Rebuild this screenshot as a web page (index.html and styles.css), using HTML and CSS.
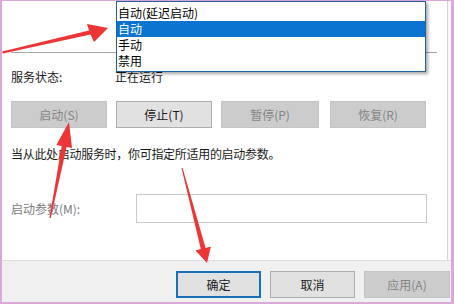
FILE: index.html
```html
<!DOCTYPE html>
<html lang="zh-CN">
<head>
<meta charset="utf-8">
<title>服务属性</title>
<link rel="stylesheet" href="styles.css">
</head>
<body>
<div class="frame">
  <div class="top">
    <div class="panel">
      <div class="sep"></div>
      <div class="status-row">
        <span class="label">服务状态:</span>
        <span class="value">正在运行</span>
      </div>
      <div class="btn-row">
        <button class="btn disabled">启动(S)</button>
        <button class="btn">停止(T)</button>
        <button class="btn disabled wide">暂停(P)</button>
        <button class="btn disabled far">恢复(R)</button>
      </div>
      <p class="hint">当从此处启动服务时，你可指定所适用的启动参数。</p>
      <div class="param-row">
        <span class="param-label">启动参数(M):</span>
        <div class="input"></div>
      </div>
    </div>
  </div>
  <div class="footer">
    <button class="btn fbtn primary">确定</button>
    <button class="btn fbtn">取消</button>
    <button class="btn fbtn disabled last">应用(A)</button>
  </div>
  <ul class="dropdown">
    <li>自动(延迟启动)</li>
    <li class="selected">自动</li>
    <li>手动</li>
    <li>禁用</li>
  </ul>
</div>
<svg class="arrows" width="454" height="304" viewBox="0 0 454 304">
  <path d="M2,51.5 L89,30.5 L87,24 L108,28 L94,42 L90.5,34.5 L3,53.5 Z"/>
  <path d="M49.5,218 L61.7,146 L56.4,145 L69,122 L72,148 L66.6,147 L50.8,218 Z"/>
  <path d="M181.5,168 L200.8,249.1 L195.5,250.5 L207,263 L210.9,246.5 L205.6,247.9 L182.6,168 Z"/>
</svg>
</body>
</html>
```
FILE: styles.css
```css
html, body {
  margin: 0;
  padding: 0;
}
body {
  width: 454px;
  height: 304px;
  background: #dba8da;
  position: relative;
  overflow: hidden;
  font-family: "Noto Sans CJK SC", "Noto Sans", sans-serif;
  font-size: 12px;
  color: #1a1a1a;
}
.frame {
  position: relative;
  margin: 1px 3px 0 2px;
  width: 449px;
  height: 301px;
  display: flex;
  flex-direction: column;
}
.top {
  height: 259px;
  background: #f9f9f9;
  padding-right: 3px;
  display: flex;
}
.panel {
  flex: 1;
  background: #ffffff;
  border-right: 1px solid #d5d5d5;
  padding-left: 9px;
  display: flex;
  flex-direction: column;
}
.sep {
  margin-top: 51px;
  margin-right: 10px;
  height: 1px;
  background: #a7a7a7;
}
.status-row {
  margin-top: 16px;
  height: 16px;
  line-height: 16px;
  display: flex;
}
.label {
  width: 104px;
}
.btn {
  font-family: "Noto Sans CJK SC", "Noto Sans", sans-serif;
  font-size: 12px;
  height: 27px;
  padding: 0;
  margin: 0;
  background: #e1e1e1;
  border: 1px solid #adadad;
  color: #1a1a1a;
  line-height: 25px;
}
.btn.disabled {
  background: #cccccc;
  border-color: #c4c4c4;
  color: #848484;
}
.btn-row {
  margin-top: 16px;
  display: flex;
}
.btn-row .btn {
  width: 96px;
  margin-right: 9px;
}
.btn-row .btn.wide {
  width: 98px;
  margin-right: 11px;
}
.hint {
  margin: 18px 0 0 0;
  height: 16px;
  line-height: 16px;
  letter-spacing: -0.3px;
}
.param-row {
  margin-top: 32px;
  display: flex;
  align-items: center;
}
.param-label {
  width: 125px;
  color: #7a7a7a;
}
.input {
  width: 289px;
  height: 27px;
  border: 1px solid #c9c9c9;
  background: #fff;
}
.footer {
  flex: 1;
  background: #f0f0f0;
  border-top: 1px solid #dcdcdc;
  display: flex;
  justify-content: flex-end;
  padding: 10px 0 0 0;
}
.fbtn {
  width: 85px;
  margin-right: 9px;
}
.fbtn.last {
  width: 86px;
  margin-right: 1px;
}
.fbtn.primary {
  border: 2px solid #1a6fb9;
  line-height: 23px;
}
.dropdown {
  position: absolute;
  left: 114px;
  top: 0;
  width: 308px;
  margin: 0;
  padding: 3px 0 2px 0;
  list-style: none;
  background: #ffffff;
  border: 1px solid #24609c;
  box-shadow: 2px 2px 3px rgba(0, 0, 0, 0.35);
}
.dropdown li {
  height: 16px;
  line-height: 16px;
  padding-left: 1px;
  color: #000;
}
.dropdown li.selected {
  background: #0b74d0;
  color: #ffffff;
}
.arrows {
  position: absolute;
  left: 0;
  top: 0;
  fill: #ee3535;
}
```
